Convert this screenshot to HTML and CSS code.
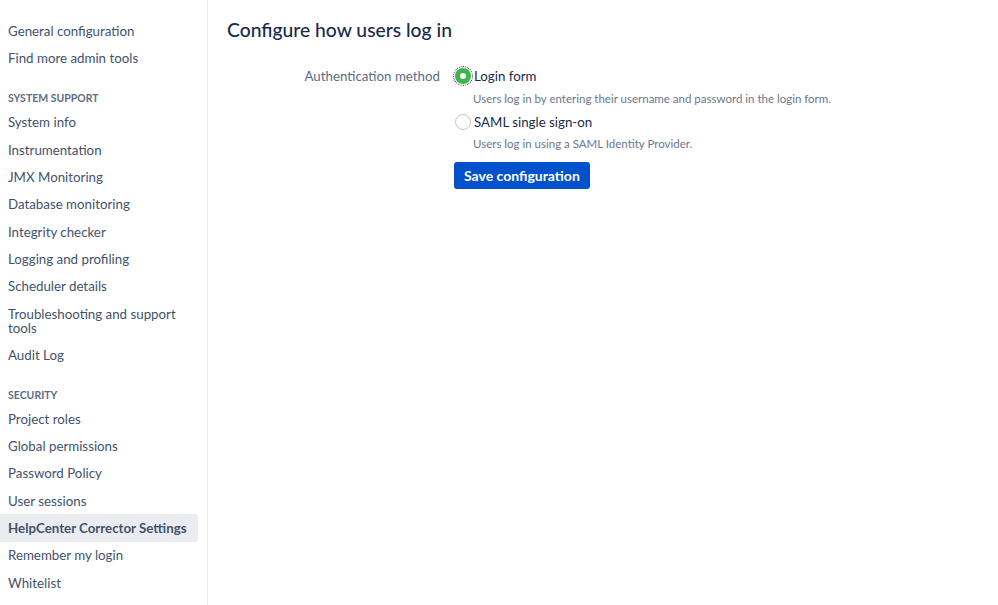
FILE: index.html
```html
<!DOCTYPE html>
<html lang="en">
<head>
    <meta charset="UTF-8">
    <meta name="viewport" content="width=device-width, initial-scale=1.0">
    <title>Configure how users log in</title>
    <link rel="stylesheet" href="styles.css">
</head>
<body>
    <div class="page">
        <nav class="sidebar">
            <ul class="nav">
                <li><a href="#">General configuration</a></li>
                <li><a href="#">Find more admin tools</a></li>
            </ul>
            <h3 class="nav-heading">System support</h3>
            <ul class="nav">
                <li><a href="#">System info</a></li>
                <li><a href="#">Instrumentation</a></li>
                <li><a href="#">JMX Monitoring</a></li>
                <li><a href="#">Database monitoring</a></li>
                <li><a href="#">Integrity checker</a></li>
                <li><a href="#">Logging and profiling</a></li>
                <li><a href="#">Scheduler details</a></li>
                <li><a href="#">Troubleshooting and support tools</a></li>
                <li><a href="#">Audit Log</a></li>
            </ul>
            <h3 class="nav-heading">Security</h3>
            <ul class="nav">
                <li><a href="#">Project roles</a></li>
                <li><a href="#">Global permissions</a></li>
                <li><a href="#">Password Policy</a></li>
                <li><a href="#">User sessions</a></li>
                <li class="selected"><a href="#">HelpCenter Corrector Settings</a></li>
                <li><a href="#">Remember my login</a></li>
                <li><a href="#">Whitelist</a></li>
            </ul>
        </nav>

        <main class="content">
            <h1>Configure how users log in</h1>
            <form class="config-form" onsubmit="return false;">
                <div class="field-label">Authentication method</div>
                <div class="field">
                    <label class="radio checked focused">
                        <span class="radio-box"></span>
                        <span>Login form</span>
                    </label>
                    <div class="description">Users log in by entering their username and password in the login form.</div>
                    <label class="radio">
                        <span class="radio-box"></span>
                        <span>SAML single sign-on</span>
                    </label>
                    <div class="description">Users log in using a SAML Identity Provider.</div>
                    <button class="button-primary">Save configuration</button>
                </div>
            </form>
        </main>
    </div>
</body>
</html>
```

FILE: styles.css
```css
body { margin: 0; font-family: Lato, "Noto Sans", Arial, sans-serif; font-size: 13.3px; color: #172b4d; background: #fff; }
.page { display: grid; grid-template-columns: 208px 1fr; min-height: 605px; }

.sidebar { border-right: 1px solid #ebecf0; padding: 17.5px 9px 0 0; }
.nav { list-style: none; margin: 0; padding: 0; }
.nav li a { display: block; padding: 6.67px 4px 6.67px 8px; line-height: 14px; color: #42526e; text-decoration: none; border-radius: 0 3px 3px 0; }
.nav li.selected a { background: #ebecf0; font-weight: bold; }
.nav-heading { margin: 0; padding: 19px 8px 3.6px; font-size: 10.5px; line-height: 14px; font-weight: bold; text-transform: uppercase; color: #5e6c84; }

.content { padding: 0 20px 0 19px; }
h1 { margin: 17px 0 0; font-size: 19.3px; font-weight: 500; line-height: 26px; color: #172b4d; }

.config-form { display: grid; grid-template-columns: 213px 1fr; column-gap: 14px; margin-top: 23px; }
.field-label { text-align: right; color: #5e6c84; line-height: 20px; }
.field { display: flex; flex-direction: column; align-items: flex-start; }

.radio { display: flex; align-items: center; gap: 2px; line-height: 20px; color: #172b4d; cursor: pointer; }
.radio-box { width: 14px; height: 14px; border: 1px solid #c1c7d0; border-radius: 50%; margin: 0 1px; }
.radio.checked .radio-box { border: 5px solid #3cb54a; width: 6px; height: 6px; background: #fff; }
.radio.focused .radio-box { outline: 1px dotted #172b4d; outline-offset: 1px; }
.description { padding-left: 19px; font-size: 11.5px; line-height: 16px; color: #6b778c; margin: 4.5px 0 5px; }

.button-primary { margin-top: 5px; padding: 0 10px; height: 27px; min-width: 135px; border: 0; border-radius: 3px; background: #0052cc; color: #fff; font-family: inherit; font-size: 14px; font-weight: bold; cursor: pointer; }
```
